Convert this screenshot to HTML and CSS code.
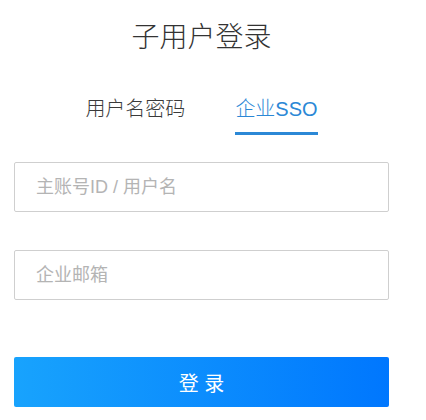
FILE: index.html
```html
<!DOCTYPE html>
<html lang="zh-CN">
<head>
    <meta charset="UTF-8">
    <meta name="viewport" content="width=device-width, initial-scale=1.0">
    <title>子用户登录</title>
    <link rel="stylesheet" href="styles.css">
</head>
<body>

    <!-- Sub-user login -->
    <div class="login-box">
        <h1 class="login-title">子用户登录</h1>

        <div class="tabs">
            <span class="tab">用户名密码</span>
            <span class="tab active">企业SSO</span>
        </div>

        <form class="login-form">
            <input type="text" class="field" placeholder="主账号ID / 用户名">
            <input type="text" class="field" placeholder="企业邮箱">
            <button type="submit" class="submit-btn">登 录</button>
        </form>
    </div>

</body>
</html>
```

FILE: styles.css
```css
body {
    margin: 0;
    background: #fff;
    font-family: "Liberation Sans", "Noto Sans CJK SC", sans-serif;
    color: #333;
}

.login-box {
    width: 375px;
    margin-left: 14px;
    padding-top: 20px;
}

.login-title {
    margin: 0;
    font-size: 28px;
    font-weight: 300;
    line-height: 36px;
    text-align: center;
    color: #333;
}

.tabs {
    display: flex;
    justify-content: center;
    gap: 50px;
    margin-top: 41px;
}

.tab {
    font-size: 20px;
    font-weight: 300;
    line-height: 24px;
    color: #3a3a3a;
    padding-bottom: 11px;
    border-bottom: 3px solid transparent;
    cursor: pointer;
}

.tab.active {
    color: #2b88d6;
    border-bottom-color: #2b88d6;
}

.login-form {
    display: flex;
    flex-direction: column;
    margin-top: 27px;
}

.field {
    height: 50px;
    box-sizing: border-box;
    padding: 0 21px;
    border: 1px solid #cfcfcf;
    border-radius: 2px;
    font-family: inherit;
    font-size: 18px;
    color: #333;
    outline: none;
    margin-bottom: 38px;
}

.field::placeholder {
    color: #b4b4b4;
}

.login-form .field + .field {
    margin-bottom: 57px;
}

.submit-btn {
    height: 50px;
    border: none;
    border-radius: 2px;
    background: linear-gradient(to right, #18a3fd, #0077fe);
    color: #fff;
    font-family: inherit;
    font-size: 20px;
    cursor: pointer;
}
```
